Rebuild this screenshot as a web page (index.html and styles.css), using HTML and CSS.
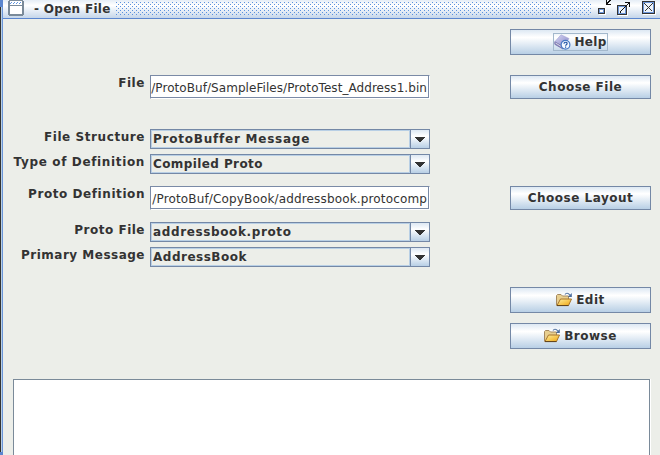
FILE: index.html
```html
<!DOCTYPE html>
<html lang="en">
<head>
<meta charset="utf-8">
<title>Open File</title>
<link rel="stylesheet" href="styles.css">
</head>
<body>
<svg class="defs" width="0" height="0" aria-hidden="true">
  <defs>
    <linearGradient id="gold" x1="0" y1="0" x2="1" y2="1"><stop offset="0" stop-color="#fff0a0"/><stop offset="1" stop-color="#efa510"/></linearGradient>
    <linearGradient id="cover" x1="0" y1="0" x2="1" y2="1"><stop offset="0" stop-color="#d8d8f4"/><stop offset="1" stop-color="#8582c4"/></linearGradient>
    <pattern id="dots" width="4" height="4" patternUnits="userSpaceOnUse"><path d="M1 1H2V2H1ZM3 3H4V4H3Z" fill="#5b91dd"/></pattern>
    <symbol id="folder" viewBox="0 0 16 16">
      <path d="M.5 13.5V3.5L1.5 2.5H5L6.5 4H12.5V7" fill="#e8cf90" stroke="#a58960"/>
      <path d="M1 13.5L4.5 7H15.5L12.5 13.5Z" fill="url(#gold)" stroke="#a8752c"/>
      <path d="M1 13.6H12.5" stroke="#5d421c"/>
      <path d="M9 2.5C10 .8 12 .6 14 3.2" fill="none" stroke="#5a7ba8" stroke-width="1.1"/>
      <path d="M15.8 1V5H11.8Z" fill="#4b6c9d"/>
    </symbol>
    <symbol id="arrow" viewBox="0 0 10 5"><path d="M0 0H10V1H9V2H8V3H7V4H6V5H4V4H3V3H2V2H1V1H0Z" fill="#333" shape-rendering="crispEdges"/></symbol>
  </defs>
</svg>
<div class="window">
  <header class="titlebar">
    <svg class="app-icon" width="16" height="16" viewBox="0 0 16 16" shape-rendering="crispEdges">
      <path d="M1 0H15V1H16V15H15V16H1V15H0V1H1Z" fill="#7a8a99"/>
      <path d="M2 1H14V5H2ZM2 6H14V14H2Z" fill="#fff"/>
      <path d="M3 2H4M6 2H7M9 2H10M12 2H13" transform="translate(0 .5)" stroke="#5f94de"/>
      <path d="M2 3H3M5 3H6M8 3H9M11 3H12" transform="translate(0 .5)" stroke="#5f94de"/>
    </svg>
    <span class="title">- Open File</span>
    <svg class="bumps" width="477" height="14" shape-rendering="crispEdges"><rect width="477" height="14" fill="url(#dots)"/></svg>
    <svg class="controls" width="60" height="18" viewBox="0 0 60 18" shape-rendering="crispEdges">
      <path d="M2 14.5H8.5V8" fill="none" stroke="#fff"/>
      <path d="M1.5 8.5H7.5V13.5H1.5Z" fill="#6382bf" stroke="#333"/>
      <path d="M2.5 9.5H6.5V12.5H2.5Z" fill="#fff" stroke="#6b95d8"/>
      <path d="M9 0V5H14V4H11V3H12V2H13V1H14V0H12V1H11V2H10V0Z" fill="#111"/>
      <path d="M21 15.5H30.5V7" fill="none" stroke="#fff"/>
      <path d="M20.5 5.5H29.5V14.5H20.5Z" fill="#edf3fa" stroke="#333"/>
      <path d="M21.5 6.5H28.5V13.5H21.5Z" fill="none" stroke="#6b95d8"/>
      <path d="M23 13V11H24V10H25V9H26V8H27V7H28V6H29V5H30V4H31V3H28V2H33V7H32V4H31V5H30V6H29V7H28V8H27V9H26V10H25V11H24V13Z" fill="#111"/>
      <path d="M45.5 1.5H57.5V13.5H45.5Z" fill="#edf3fa" stroke="#333"/>
      <path d="M46.5 2.5H56.5V12.5H46.5Z" fill="none" stroke="#6b95d8"/>
      <path d="M46 14.5H58.5V2" fill="none" stroke="#fff"/>
      <path d="M47.5 3.5L55.5 11.5M55.5 3.5L47.5 11.5" fill="none" stroke="#333" stroke-width="1.4"/>
    </svg>
  </header>
  <main class="form">
    <button class="button tall help"><span class="focus"><svg width="17" height="16" viewBox="0 0 17 16"><path d="M1 7.5L7 .8L15 4.5L9.5 12.5Z" fill="url(#cover)" stroke="#a5a4d5" stroke-width=".6"/><path d="M.8 7.8L9 12.5V15L.8 10.3Z" fill="#8b86bd" stroke="#6661a4" stroke-width=".7"/><path d="M1.5 9L9 13.5" stroke="#eee" stroke-width=".8"/><circle cx="11.5" cy="10.8" r="4.4" fill="#f3f8ff" stroke="#4679c5" stroke-width="1.2"/><path d="M10 9.7C10 7.8 13.2 7.8 13.1 9.6C13 10.7 11.6 10.7 11.6 11.8M11.6 12.6V13.8" fill="none" stroke="#2456a5" stroke-width="1.2"/></svg><span>Help</span></span></button>

    <label class="label">File</label>
    <div class="text"><span class="path-sample">/ProtoBuf/SampleFiles/ProtoTest_Address1.bin</span></div>
    <button class="button"><span>Choose File</span></button>

    <label class="label">File Structure</label>
    <div class="combo"><span class="value wide">ProtoBuffer Message</span><span class="drop"><svg width="10" height="5"><use href="#arrow"/></svg></span></div>

    <label class="label spaced">Type of Definition</label>
    <div class="combo"><span class="value tight">Compiled Proto</span><span class="drop"><svg width="10" height="5"><use href="#arrow"/></svg></span></div>

    <label class="label">Proto Definition</label>
    <div class="text"><span class="path-copybook">/ProtoBuf/CopyBook/addressbook.protocomp</span></div>
    <button class="button"><span>Choose Layout</span></button>

    <label class="label snug">Proto File</label>
    <div class="combo"><span class="value loose">addressbook.proto</span><span class="drop"><svg width="10" height="5"><use href="#arrow"/></svg></span></div>

    <label class="label snug">Primary Message</label>
    <div class="combo"><span class="value">AddressBook</span><span class="drop"><svg width="10" height="5"><use href="#arrow"/></svg></span></div>

    <button class="button tall edit"><svg width="16" height="16"><use href="#folder"/></svg><span>Edit</span></button>
    <button class="button tall browse"><svg width="16" height="16"><use href="#folder"/></svg><span>Browse</span></button>
    <div class="message"></div>
  </main>
</div>
</body>
</html>
```
FILE: styles.css
```css
* { box-sizing: border-box; }
body {
  margin: 0;
  height: 455px;
  overflow: hidden;
  background: #eceee9;
  color: #333;
  font: bold 12px/14px "DejaVu Sans", sans-serif;
  letter-spacing: 0.5px;
}
.defs { position: absolute; }
svg { display: block; flex: none; }
.window {
  height: 455px;
  padding-left: 3px;
  background:
    linear-gradient(#5b86cf, #5b86cf) 0 0 / 3px 7px no-repeat,
    linear-gradient(#5b86cf, #5b86cf) 0 452px / 3px 3px no-repeat,
    linear-gradient(90deg, #333 1px, #b8cfe5 1px 2px, #6b95d8 2px) 0 0 / 3px 455px no-repeat;
}
.titlebar {
  display: flex;
  height: 19px;
  padding-left: 5px;
  border-bottom: 1px solid #5b86cf;
  background: linear-gradient(#e5edf6, #fff 30%, #c5d6ea);
}
.title { width: 77px; margin-left: 10px; padding-top: 2px; white-space: pre; letter-spacing: 0.3px; }
.bumps { margin: 1px 5px 0 4px; }
.form {
  display: grid;
  grid-template-columns: 137px 280px 80px 141px;
  grid-template-rows: 46px 54px 25px 32px 36px 25px 40px 36px 56px 76px;
  align-items: start;
  padding: 10px 0 0 10px;
}
.label {
  grid-column: 1;
  height: 14px;
  margin-top: 1px;
  padding-right: 5px;
  overflow: hidden;
  text-align: right;
  white-space: nowrap;
  letter-spacing: 0.57px;
}
.spaced { letter-spacing: 0.64px; }
.snug { letter-spacing: 0.5px; }
.text, .combo { grid-column: 2; }
.button {
  grid-column: 4;
  display: flex;
  align-items: center;
  justify-content: center;
  gap: 4px;
  height: 24px;
  padding: 0;
  border: 1px solid #7488a6;
  border-radius: 0;
  background: linear-gradient(#dde8f3, #fff 30%, #fff 32%, #b8cfe5);
  color: #333;
  font: inherit;
  letter-spacing: inherit;
}
.tall { height: 26px; }
.edit { grid-row: 8; }
.browse { grid-row: 9; }
.focus {
  display: flex;
  align-items: center;
  gap: 3px;
  height: 18px;
  border: 1px solid #a3b8cc;
  letter-spacing: 0.3px;
}
.text {
  display: flex;
  justify-content: flex-end;
  width: 280px;
  height: 24px;
  padding: 5px 2px 0 1px;
  overflow: hidden;
  border: 1px solid #7a8aa6;
  border-right-color: #fff;
  border-bottom-color: #fff;
  background: #fff;
  box-shadow: inset -1px -1px #7a8aa6;
  font-weight: normal;
  white-space: nowrap;
}
.path-sample { letter-spacing: 0.06px; }
.path-copybook { letter-spacing: 0.15px; }
.combo { display: flex; height: 20px; border: 1px solid #7488a6; }
.value { width: 260px; padding: 1px; border: 1px solid #b8cfe5; white-space: nowrap; }
.wide { letter-spacing: 0.77px; }
.loose { letter-spacing: 0.62px; }
.tight { letter-spacing: 0.4px; }
.drop {
  display: flex;
  align-items: center;
  justify-content: center;
  width: 19px;
  border-left: 1px solid #7488a6;
  background: linear-gradient(#dde8f3, #fff 35%, #b8cfe5);
}
.message {
  grid-column: 1 / 5;
  grid-row: 10;
  height: 80px;
  margin-right: 1px;
  border: 1px solid #7a8a99;
  background: #fff;
  box-shadow: 1px 0 #fff;
}
```
